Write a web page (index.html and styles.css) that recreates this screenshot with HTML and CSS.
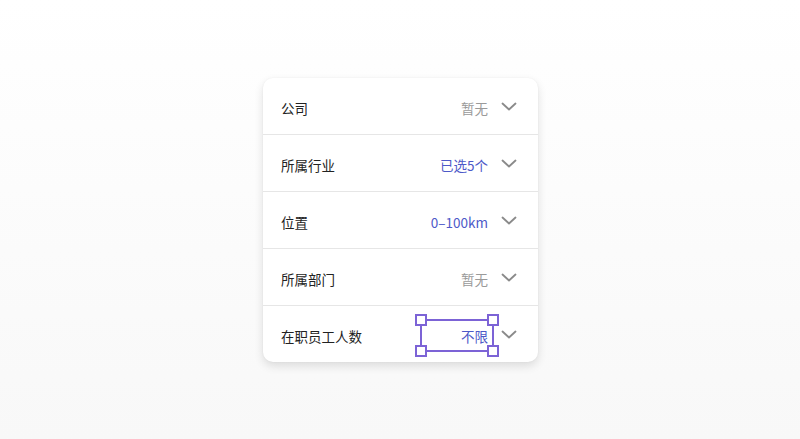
FILE: index.html
```html
<!DOCTYPE html>
<html lang="zh">
<head>
<meta charset="utf-8">
<link rel="stylesheet" href="styles.css">
</head>
<body>
<div class="stage">
  <div class="card">
    <div class="row">
      <span class="label">公司</span>
      <span class="value muted">暂无</span>
      <svg class="chev" viewBox="0 0 16 10"><path d="M1.5 1.5 L8 7.5 L14.5 1.5"/></svg>
    </div>
    <div class="row">
      <span class="label">所属行业</span>
      <span class="value accent">已选5个</span>
      <svg class="chev" viewBox="0 0 16 10"><path d="M1.5 1.5 L8 7.5 L14.5 1.5"/></svg>
    </div>
    <div class="row">
      <span class="label">位置</span>
      <span class="value accent">0–100km</span>
      <svg class="chev" viewBox="0 0 16 10"><path d="M1.5 1.5 L8 7.5 L14.5 1.5"/></svg>
    </div>
    <div class="row">
      <span class="label">所属部门</span>
      <span class="value muted">暂无</span>
      <svg class="chev" viewBox="0 0 16 10"><path d="M1.5 1.5 L8 7.5 L14.5 1.5"/></svg>
    </div>
    <div class="row">
      <span class="label">在职员工人数</span>
      <span class="value accent selected">不限
        <span class="sel-box">
          <i class="h tl"></i><i class="h tr"></i><i class="h bl"></i><i class="h br"></i>
        </span>
      </span>
      <svg class="chev" viewBox="0 0 16 10"><path d="M1.5 1.5 L8 7.5 L14.5 1.5"/></svg>
    </div>
  </div>
</div>
</body>
</html>
```

FILE: styles.css
```css
html, body {
  margin: 0;
  padding: 0;
}
body {
  width: 800px;
  height: 439px;
  background: linear-gradient(#ffffff, #f8f8f8);
  font-family: "Noto Sans CJK SC", "Noto Sans", sans-serif;
  overflow: hidden;
}
.stage {
  display: flex;
  justify-content: center;
  padding-top: 78px;
  padding-left: 1px;
}
.card {
  width: 275px;
  background: #fff;
  border-radius: 10px;
  box-shadow: 0 4px 10px rgba(0,0,0,0.12), 0 0 2px rgba(0,0,0,0.05);
  display: flex;
  flex-direction: column;
}
.row {
  height: 56px;
  display: flex;
  align-items: center;
  padding: 0 21px 0 18px;
  border-bottom: 1px solid #e6e6e6;
  box-sizing: content-box;
}
.row:last-child {
  border-bottom: none;
}
.label {
  flex: 1;
  font-size: 13.5px;
  color: #222;
  padding-top: 3px;
}
.value {
  font-size: 13.5px;
  padding-top: 3px;
  position: relative;
}
.muted { color: #9a9a9a; }
.accent { color: #4d59c8; }
.chev {
  width: 16px;
  height: 10px;
  margin-left: 13px;
  margin-top: 1px;
  fill: none;
  stroke: #8a8a8a;
  stroke-width: 1.8;
  stroke-linecap: round;
  stroke-linejoin: round;
}
.sel-box {
  position: absolute;
  left: -41px;
  right: -6px;
  top: -4px;
  bottom: -6px;
  border: 2px solid #7c63d6;
}
.h {
  position: absolute;
  width: 8px;
  height: 8px;
  background: #fff;
  border: 2px solid #7c63d6;
}
.tl { left: -7px; top: -7px; }
.tr { right: -7px; top: -7px; }
.bl { left: -7px; bottom: -7px; }
.br { right: -7px; bottom: -7px; }
```
